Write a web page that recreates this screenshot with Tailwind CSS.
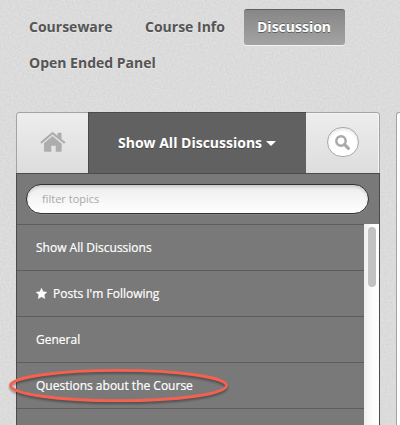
<!DOCTYPE html>
<html lang="en">
<head>
<meta charset="utf-8">
<title>Discussion</title>
<script src="https://cdn.jsdelivr.net/npm/@tailwindcss/browser@4"></script>
</head>
<body class="relative h-[425px] w-[400px] overflow-hidden bg-[#dbdbdb] font-['Open_Sans','Noto_Sans',sans-serif]">
  <!-- paper grain -->
  <svg class="absolute inset-0 h-full w-full" aria-hidden="true">
    <filter id="grain" color-interpolation-filters="sRGB"><feTurbulence type="fractalNoise" baseFrequency="0.5" numOctaves="2" seed="4"/><feColorMatrix values="0.1 0 0 0 0.812  0.1 0 0 0 0.812  0.1 0 0 0 0.812  0 0 0 0 1"/></filter>
    <rect width="100%" height="100%" filter="url(#grain)" opacity="0.7"/>
  </svg>

  <nav class="relative flex h-[112px] flex-wrap content-start pt-[9px] pl-4 text-[14px] leading-[36px] font-bold text-[#555] [text-shadow:0_1px_0_rgba(255,255,255,0.4)]">
    <a class="h-9 w-[116px] pl-[13px]">Courseware</a>
    <a class="h-9 w-[112px] pl-[13px]">Course Info</a>
    <a class="h-9 w-[101px] rounded-[3px] border-t border-[#5f5f5f] bg-linear-to-b from-[#878787] to-[#a3a3a3] pl-[13px] leading-[34px] text-white shadow-[0_1px_0_#f2f2f2] [text-shadow:0_-1px_0_rgba(0,0,0,0.3),0_1px_0_rgba(0,0,0,0.4)]">Discussion</a>
    <a class="h-9 w-[200px] pl-[13px]">Open Ended Panel</a>
  </nav>

  <main class="relative flex items-start gap-4 pl-4">
    <section class="w-[364px] shrink-0">
      <header class="flex h-[61px] overflow-hidden rounded-t-[3px] bg-linear-to-b from-[#ededed] to-[#dddddd]">
        <div class="flex w-[72px] items-start justify-center rounded-tl-[3px] border-t border-l border-[#a3a3a3] pt-[18px] pl-px">
          <svg class="h-[21px] w-[26px]" viewBox="0 0 26 21" fill="#adadad">
            <path d="M12.500 .7 17.500 4.700V1.700h4v6.200l4 3.200-1.300 1.600L12.500 3.400 1.600 12.700.3 11.100Z"/>
            <path d="m12.500 5.100 9.200 7.600v7.100q0 1-1 1h-5v-6h-4.400v6H5q-1 0-1-1v-7.500Z"/>
          </svg>
        </div>
        <div class="flex w-[218px] items-center border-t border-l border-[#4a4a4a] bg-[#616161] pb-px pl-[29px] text-[14px] font-bold text-white [text-shadow:0_1px_0_rgba(0,0,0,0.3)]">
          <span class="whitespace-nowrap">Show All Discussions</span>
          <svg class="ml-1 mt-[2px] h-[5px] w-[10px]" viewBox="0 0 10 5" fill="#fff"><path d="M0 0h10L5 5Z"/></svg>
        </div>
        <div class="flex flex-1 justify-center rounded-tr-[3px] border-t border-r border-[#a3a3a3] pt-[14px] shadow-[inset_-1px_1px_0_#f5f5f5]">
          <div class="flex h-[30px] w-8 items-center justify-center rounded-full border border-[#a9a9a9] bg-white shadow-[inset_0_2px_3px_rgba(0,0,0,0.1)]">
            <svg class="h-[15px] w-[15px]" viewBox="0 0 15 15" fill="none" stroke="#a9a9a9"><circle cx="6" cy="6" r="4.700" stroke-width="2.500"/><path d="m9.400 9.400 4 4" stroke-width="3" stroke-linecap="round"/></svg>
          </div>
        </div>
      </header>

      <div class="h-[252px] overflow-hidden border border-b-0 border-[#4b4b4b] bg-[#797979]">
        <div class="flex h-[50px] items-start pr-[10px] pl-[9px] pt-[10px]">
          <div class="flex h-[30px] w-full items-center rounded-full border border-[#333] bg-linear-to-b from-[#ececec] to-white pl-[15px] text-[11px] text-[#a9a9a9] shadow-[inset_0_2px_3px_rgba(0,0,0,0.15),0_1px_0_#858585]">filter topics</div>
        </div>
        <div class="flex">
          <ul class="w-[347px] text-[12px] leading-[45px] text-white [-webkit-text-stroke:0.2px_#fff]">
            <li class="h-[46px] border-t border-[#5d5d5d] pl-[19px]">Show All Discussions</li>
            <li class="flex h-[46px] items-center border-t border-[#5d5d5d] pl-[19px]">
              <svg class="mr-[6px] h-[11px] w-[11px]" viewBox="0 0 11 11" fill="#fff" stroke="#fff" stroke-width=".5" stroke-linejoin="round"><path d="m5.500 .3 1.600 3.400 3.700.5-2.700 2.600.7 3.800-3.300-1.900-3.300 1.900.7-3.800L.2 4.200l3.700-.5Z"/></svg>Posts I'm Following
            </li>
            <li class="h-[46px] border-t border-[#5d5d5d] pl-[19px]">General</li>
            <li class="h-[46px] border-t border-[#5d5d5d] pl-[19px]">Questions about the Course</li>
            <li class="h-[46px] border-t border-[#5d5d5d]"></li>
          </ul>
          <div class="flex flex-1 justify-center bg-linear-to-r from-[#efefef] via-[#fbfbfb] to-white pt-[3px]">
            <div class="h-[60px] w-2 rounded-full bg-[#c2c2c2]"></div>
          </div>
        </div>
      </div>
    </section>
    <section class="h-[313px] w-5 shrink-0 rounded-tl-[3px] border-t border-l border-[#a3a3a3] bg-white"></section>
  </main>

  <!-- highlight ring -->
  <svg class="absolute top-[364px] left-[4px] h-[44px] w-[230px] drop-shadow-[0_2px_1px_rgba(0,0,0,0.35)]" viewBox="0 0 230 44" fill="none"><ellipse cx="114.500" cy="21.500" rx="108" ry="15.200" stroke="#f7604f" stroke-width="2.800"/></svg>
</body>
</html>
